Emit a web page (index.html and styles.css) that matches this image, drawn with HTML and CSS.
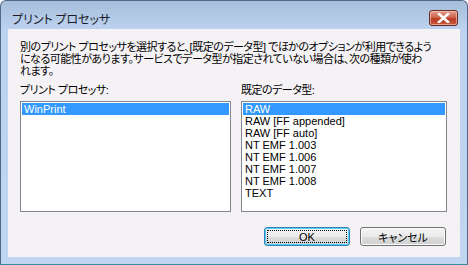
FILE: index.html
```
<!DOCTYPE html>
<html lang="ja">
<head>
  <meta charset="UTF-8">
  <title>プリント プロセッサ</title>
  <link rel="stylesheet" href="styles.css">
</head>
<body>

  <div class="window">
    <div class="titlebar">
      <span class="title">プリント プロセッサ</span>
      <button class="close" title="閉じる">
        <svg width="13" height="10" viewBox="0 0 13 10">
          <path d="M2 1 L11 9 M11 1 L2 9" stroke="#fff" stroke-width="2.6" stroke-linecap="square"/>
        </svg>
      </button>
    </div>

    <div class="client">
      <p class="intro">
        <span class="line">別のプリント プロセッサを選択すると、[既定のデータ型] でほかのオプションが利用できるよう</span>
        <span class="line">になる可能性があります。サービスでデータ型が指定されていない場合は、次の種類が使わ</span>
        <span class="line">れます。</span>
      </p>

      <div class="columns">
        <div class="col">
          <div class="label">プリント プロセッサ:</div>
          <ul class="listbox">
            <li class="selected">WinPrint</li>
          </ul>
        </div>
        <div class="col">
          <div class="label">既定のデータ型:</div>
          <ul class="listbox">
            <li class="selected">RAW</li>
            <li>RAW [FF appended]</li>
            <li>RAW [FF auto]</li>
            <li>NT EMF 1.003</li>
            <li>NT EMF 1.006</li>
            <li>NT EMF 1.007</li>
            <li>NT EMF 1.008</li>
            <li>TEXT</li>
          </ul>
        </div>
      </div>

      <div class="buttons">
        <button class="btn default">OK</button>
        <button class="btn">キャンセル</button>
      </div>
    </div>
  </div>

</body>
</html>
```

FILE: styles.css
```
body {
  margin: 0;
  background-color: #ffffff;
  font-family: "Liberation Sans", "Noto Sans CJK JP", sans-serif;
  font-size: 11px;
  font-feature-settings: "palt";
  color: #000;
}
.window {
  width: 468px;
  height: 265px;
  box-sizing: border-box;
  border: 1px solid #50698a;
  border-bottom-color: #2f8f9f;
  border-radius: 6px 6px 0 0;
  background: linear-gradient(#a7bedb, #bcd2ee 28px, #bfd5f0);
  padding: 0 7px 7px 7px;
}
.titlebar {
  height: 28px;
  display: flex;
  justify-content: space-between;
  align-items: flex-start;
}
.title {
  font-family: "Noto Sans CJK JP", sans-serif;
  font-size: 12px;
  color: #1b1b2a;
  padding: 9px 0 0 4px;
}
.close {
  margin: 9px 2px 0 0;
  width: 29px;
  height: 16px;
  padding: 0;
  border: 1px solid #6a2a22;
  border-radius: 3px;
  background: linear-gradient(#e59b8d, #d0664f 45%, #bb3a22 55%, #c95a3f);
  box-shadow: inset 0 0 0 1px rgba(255, 220, 210, 0.55);
  display: flex;
  align-items: center;
  justify-content: center;
}
.client {
  background-color: #f5f2f5;
  height: 228px;
  box-sizing: border-box;
  padding: 12px 14px 0 12px;
}
.intro {
  margin: 0;
  line-height: 12px;
  letter-spacing: -0.5px;
}
.line {
  display: block;
  white-space: nowrap;
}
.columns {
  display: grid;
  grid-template-columns: 211px 206px;
  column-gap: 10px;
  margin-top: 7px;
}
.label {
  line-height: 12px;
  letter-spacing: -0.5px;
  margin-bottom: 5px;
}
.listbox {
  list-style: none;
  margin: 0;
  padding: 1px;
  height: 111px;
  box-sizing: border-box;
  border: 1px solid #828790;
  background-color: #fff;
}
.listbox li {
  height: 12px;
  line-height: 12px;
  padding-left: 2px;
  white-space: nowrap;
}
.listbox li.selected {
  background-color: #3399ff;
  color: #fff;
}
.buttons {
  display: flex;
  justify-content: flex-end;
  gap: 10px;
  margin-top: 15px;
}
.btn {
  width: 86px;
  height: 19px;
  padding: 0;
  font-family: "Liberation Sans", "Noto Sans CJK JP", sans-serif;
  font-size: 11px;
  font-feature-settings: "palt";
  color: #000;
  border: 1px solid #707070;
  border-radius: 3px;
  background: linear-gradient(#f3f3f3, #ebebeb 50%, #dddddd 50%, #cfcfcf);
  box-shadow: inset 0 0 0 1px #fcfcfc;
}
.btn.default {
  border-color: #3c7fb1;
  box-shadow: inset 0 0 0 1px #48d2fb;
  outline: 1px dotted #000;
  outline-offset: -4px;
}
```
